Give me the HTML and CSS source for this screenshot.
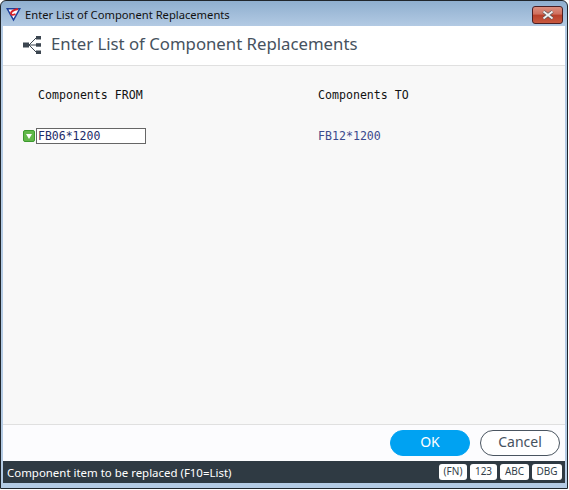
FILE: index.html
```html
<!DOCTYPE html>
<html lang="en">
<head>
    <meta charset="UTF-8">
    <title>Enter List of Component Replacements</title>
    <link rel="stylesheet" href="styles.css">
</head>
<body>
    <div class="window">
        <div class="titlebar">
            <svg class="app-icon" width="15" height="15" viewBox="0 0 15 15">
                <path d="M0 1H15L7.5 14.5Z" fill="#1d3f9a"/>
                <path d="M2.5 2.5H12.5L7.5 11.5Z" fill="#fff"/>
                <path d="M12 2C7.5 3 4.5 4.5 5 6.8C5.3 8.2 7 8.2 9.5 7.2" fill="none" stroke="#d8232a" stroke-width="1.9"/>
            </svg>
            <span class="title-text">Enter List of Component Replacements</span>
            <button class="close-btn">
                <svg width="14" height="10" viewBox="0 0 14 10">
                    <path d="M2.5 1.5L11.5 8.5M11.5 1.5L2.5 8.5" stroke="#555" stroke-width="3.4"/>
                    <path d="M2.5 1.5L11.5 8.5M11.5 1.5L2.5 8.5" stroke="#f2f2f2" stroke-width="2"/>
                </svg>
            </button>
        </div>
        <div class="inner">
            <div class="header">
                <svg class="header-icon" width="18" height="18" viewBox="0 0 18 18">
                    <rect x="0" y="6.5" width="6" height="5" fill="#3c4650"/>
                    <rect x="13" y="0" width="5" height="3.5" fill="#3c4650"/>
                    <rect x="13" y="7.2" width="5" height="3.5" fill="#3c4650"/>
                    <rect x="13" y="14.5" width="5" height="3.5" fill="#3c4650"/>
                    <path d="M6 9L13 2M6 9H13M6 9L13 16" stroke="#3c4650" stroke-width="1" fill="none"/>
                </svg>
                <h1>Enter List of Component Replacements</h1>
            </div>
            <div class="content">
                <div class="col-heads">
                    <div class="col-from">Components FROM</div>
                    <div class="col-to">Components TO</div>
                </div>
                <div class="row">
                    <div class="cell-from">
                        <span class="list-btn"><span class="arrow"></span></span>
                        <input class="field" type="text" value="FB06*1200">
                    </div>
                    <div class="cell-to">FB12*1200</div>
                </div>
            </div>
            <div class="actions">
                <button class="btn btn-ok">OK</button>
                <button class="btn btn-cancel">Cancel</button>
            </div>
            <div class="status">
                <span class="status-text">Component item to be replaced (F10=List)</span>
                <span class="chip chip-fn">(FN)</span>
                <span class="chip chip-num">123</span>
                <span class="chip chip-abc">ABC</span>
                <span class="chip chip-dbg">DBG</span>
            </div>
        </div>
    </div>
</body>
</html>
```

FILE: styles.css
```css
html, body {
    margin: 0;
    background: #fff;
}
body {
    width: 569px;
    height: 490px;
    overflow: hidden;
    font-family: "Noto Sans", "Open Sans", sans-serif;
}
.window {
    width: 568px;
    height: 489px;
    box-sizing: border-box;
    border: 1px solid #20262c;
    border-radius: 6px 6px 0 0;
    background: linear-gradient(#8fafcf 0, #b4cbe4 26px, #b4cbe4 100%);
    display: flex;
    flex-direction: column;
}
.titlebar {
    height: 25px;
    display: flex;
    align-items: center;
    padding: 0 4px 0 5px;
    flex: none;
}
.app-icon {
    margin: 2px 4px 0 0;
}
.title-text {
    font-size: 11.2px;
    color: #111;
    flex: 1;
    margin-top: 2px;
}
.close-btn {
    width: 31px;
    height: 18px;
    margin-top: 2px;
    padding: 0;
    border: 1px solid #4a1f24;
    border-radius: 3px;
    background: linear-gradient(#dc8f7f 0, #cf6f5d 45%, #b8402a 50%, #c8593f 100%);
    display: flex;
    align-items: center;
    justify-content: center;
}
.inner {
    flex: 1;
    margin: 0 2px 5px 2px;
    display: flex;
    flex-direction: column;
    background: #fff;
    min-height: 0;
}
.header {
    height: 40px;
    box-sizing: border-box;
    flex: none;
    display: flex;
    align-items: center;
    padding: 0 0 1px 20px;
    border-bottom: 1px solid #e0e0e0;
    background: #fff;
}
.header-icon {
    margin-right: 10px;
}
h1 {
    margin: 0 0 3px 0;
    font-size: 16.75px;
    font-weight: 400;
    color: #46525e;
}
.content {
    flex: 1;
    background: #f8f8f8;
    font-family: "DejaVu Sans Mono", monospace;
    font-size: 11.6px;
    color: #111;
}
.col-heads {
    display: flex;
    padding: 22px 0 0 35px;
}
.col-from {
    width: 280px;
}
.row {
    display: flex;
    align-items: center;
    margin-top: 26px;
    padding-left: 20px;
}
.cell-from {
    width: 295px;
    display: flex;
    align-items: center;
}
.list-btn {
    width: 12px;
    height: 12px;
    box-sizing: border-box;
    border: 1px solid #3c9a2e;
    border-radius: 2px;
    background: #62b84a;
    margin-right: 1px;
    display: flex;
    align-items: center;
    justify-content: center;
}
.arrow {
    width: 0;
    height: 0;
    border-left: 3px solid transparent;
    border-right: 3px solid transparent;
    border-top: 5px solid #fff;
}
.field {
    width: 110px;
    height: 16px;
    box-sizing: border-box;
    border: 1px solid #666;
    background: #fff;
    padding: 0 1px;
    font: inherit;
    font-size: 11.5px;
    color: #1c2c6a;
    outline: none;
}
.cell-to {
    color: #3b4a8c;
}
.actions {
    height: 36px;
    flex: none;
    display: flex;
    align-items: center;
    justify-content: flex-end;
    gap: 10px;
    padding-right: 5px;
    border-top: 1px solid #e0e0e0;
    background: #fcfcfe;
}
.btn {
    width: 80px;
    height: 26px;
    border-radius: 13px;
    font-family: inherit;
    font-size: 14px;
    padding: 0 0 3px 0;
}
.btn-ok {
    border: 1px solid #00a2f2;
    background: #00a2f2;
    color: #fff;
}
.btn-cancel {
    border: 1px solid #4a5560;
    background: #fff;
    color: #46525e;
}
.status {
    height: 22px;
    flex: none;
    display: flex;
    align-items: center;
    gap: 3px;
    padding: 0 3px 0 4px;
    background: #2f3a43;
}
.status-text {
    flex: 1;
    font-size: 11.45px;
    color: #fff;
}
.chip {
    height: 16px;
    border-radius: 3px;
    background: #fff;
    color: #333f4a;
    font-size: 10px;
    text-align: center;
    line-height: 15px;
}
.chip-fn {
    width: 28px;
}
.chip-num {
    width: 27px;
}
.chip-abc {
    width: 29px;
}
.chip-dbg {
    width: 30px;
}
```
